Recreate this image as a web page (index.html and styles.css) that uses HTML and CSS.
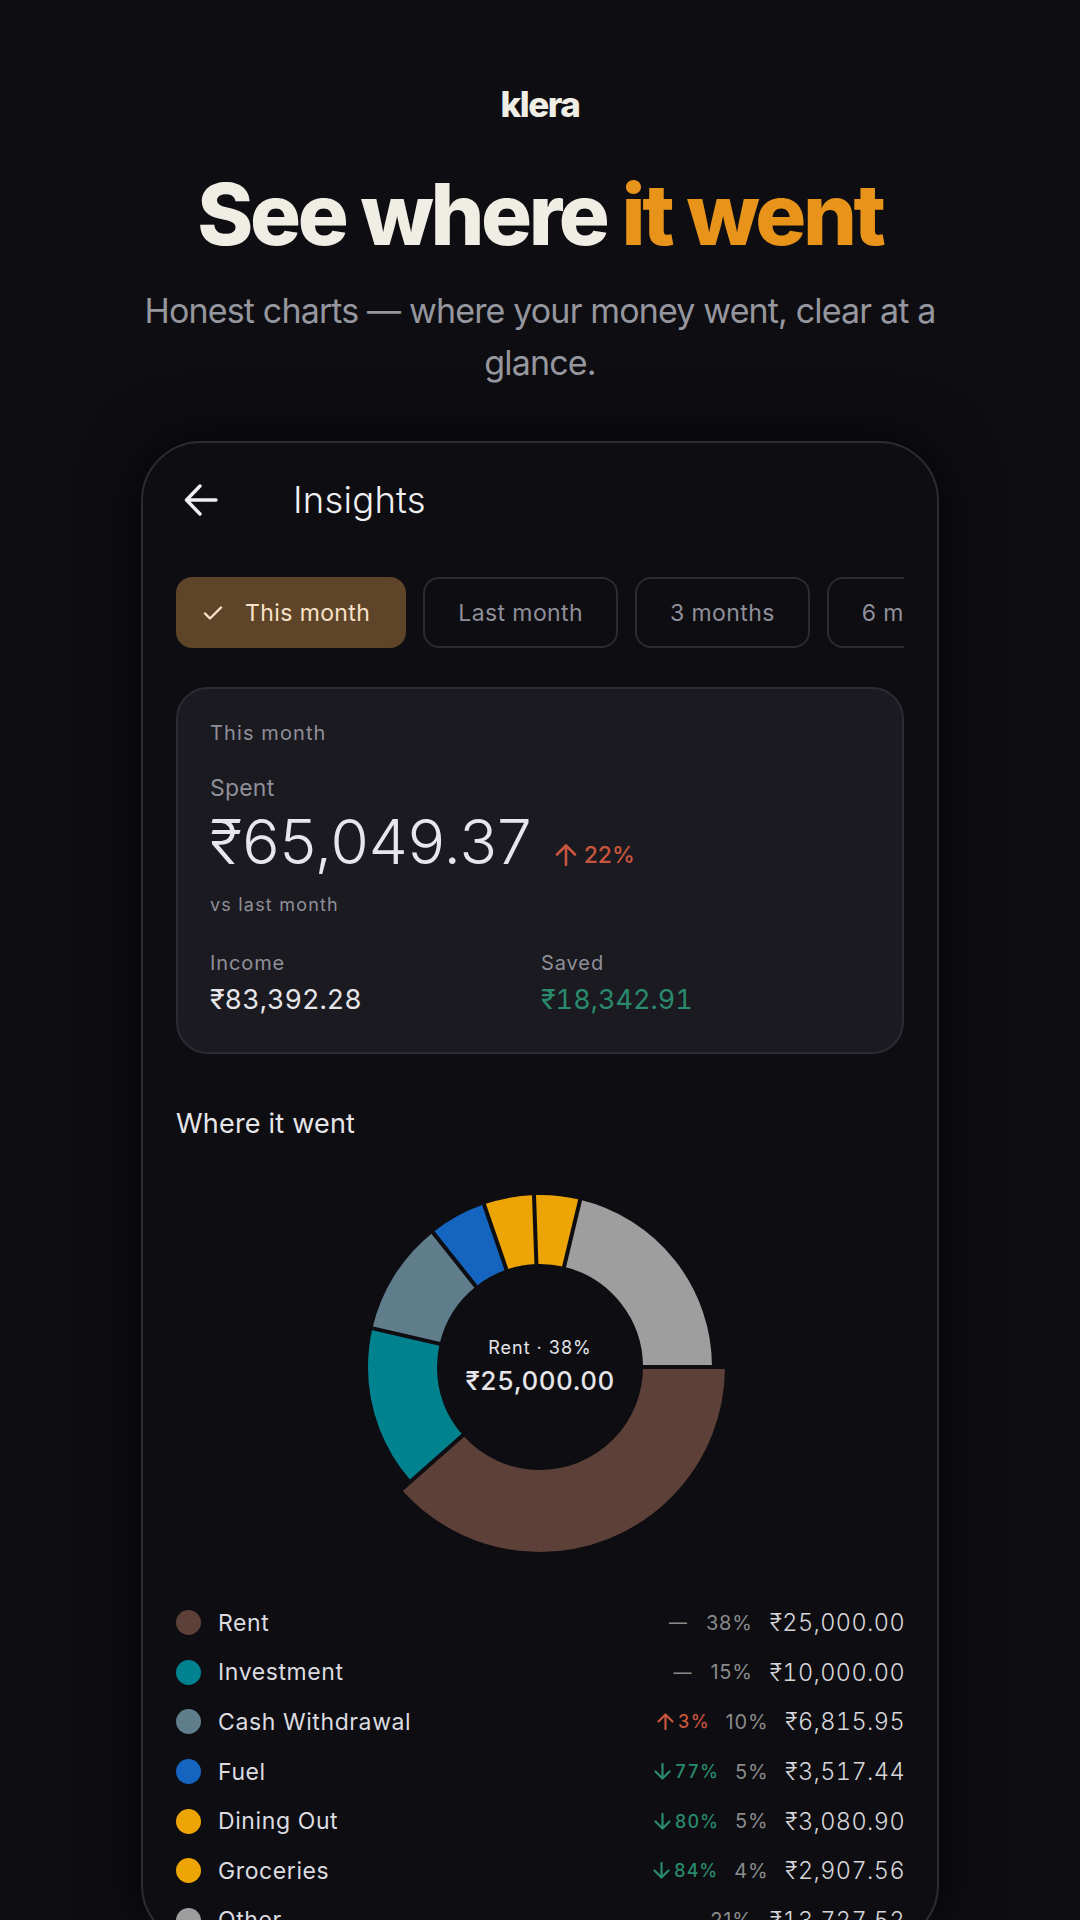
FILE: index.html
```html
<!DOCTYPE html>
<html lang="en">
<head>
  <meta charset="UTF-8" />
  <meta name="viewport" content="width=device-width, initial-scale=1.0" />
  <title>Klera - See where it went</title>
  <link rel="stylesheet" href="styles.css">
</head>
<body>
  <div class="hero">
    <div class="logo">klera</div>
    <h1>See where <span class="accent">it went</span></h1>
    <p class="tagline">Honest charts — where your money went, clear at a glance.</p>
  </div>

  <div class="phone">
    <div class="topbar">
      <svg class="back" width="34" height="32" viewBox="0 0 34 32" fill="none" stroke="#f0f0f2" stroke-width="3.4" stroke-linecap="round" stroke-linejoin="round">
        <path d="M32 16H3M16 2 2.500 16 16 30" />
      </svg>
      <div class="screen-title">Insights</div>
    </div>

    <div class="chips">
      <div class="chip selected">
        <svg width="20" height="14" viewBox="0 0 20 14" fill="none" stroke="#f7e2c8" stroke-width="2.400" stroke-linecap="round" stroke-linejoin="round">
          <path d="M2 7.500 7 12.500 18 1.500" />
        </svg>
        This month
      </div>
      <div class="chip">Last month</div>
      <div class="chip">3 months</div>
      <div class="chip">6 months</div>
    </div>

    <div class="card">
      <div class="period">This month</div>
      <div class="spent-label">Spent</div>
      <div class="spent-row">
        <span class="spent-value">₹65,049.37</span>
        <span class="spent-delta">
          <svg width="22" height="22" viewBox="0 0 22 22" fill="none" stroke="#c8553d" stroke-width="2.600" stroke-linecap="round" stroke-linejoin="round">
            <path d="M11 21V2M2 10.500 11 1.500 20 10.500" />
          </svg>
          22%
        </span>
      </div>
      <div class="versus">vs last month</div>
      <div class="totals">
        <div>
          <div class="total-label">Income</div>
          <div class="total-value">₹83,392.28</div>
        </div>
        <div>
          <div class="total-label">Saved</div>
          <div class="total-value green">₹18,342.91</div>
        </div>
      </div>
    </div>

    <div class="section-title">Where it went</div>

    <div class="donut">
      <svg width="372" height="372" viewBox="-186 -186 372 372" fill="none">
        <!-- angles run clockwise from 3 o'clock, pathLength 360 so dasharray is in degrees -->
        <circle r="144" stroke="#5d4037" stroke-width="82" pathLength="360" stroke-dasharray="138.500 221.500" />
        <circle r="137.500" stroke="#00838f" stroke-width="69" pathLength="360" stroke-dasharray="54.500 305.500" stroke-dashoffset="-138.500" />
        <circle r="137.500" stroke="#607d8b" stroke-width="69" pathLength="360" stroke-dasharray="38.500 321.500" stroke-dashoffset="-193" />
        <circle r="137.500" stroke="#1565c0" stroke-width="69" pathLength="360" stroke-dasharray="19.500 340.500" stroke-dashoffset="-231.500" />
        <circle r="137.500" stroke="#eca504" stroke-width="69" pathLength="360" stroke-dasharray="17 343" stroke-dashoffset="-251" />
        <circle r="137.500" stroke="#eca504" stroke-width="69" pathLength="360" stroke-dasharray="15.500 344.500" stroke-dashoffset="-268" />
        <circle r="137.500" stroke="#9e9e9e" stroke-width="69" pathLength="360" stroke-dasharray="76.500 283.500" stroke-dashoffset="-283.500" />
        <g class="gaps">
          <line x1="95" x2="186" />
          <line x1="95" x2="186" transform="rotate(138.500)" />
          <line x1="95" x2="186" transform="rotate(193)" />
          <line x1="95" x2="186" transform="rotate(231.500)" />
          <line x1="95" x2="186" transform="rotate(251)" />
          <line x1="95" x2="186" transform="rotate(268)" />
          <line x1="95" x2="186" transform="rotate(283.500)" />
        </g>
      </svg>
      <div class="donut-center">
        <div class="donut-label">Rent · 38%</div>
        <div class="donut-value">₹25,000.00</div>
      </div>
    </div>

    <div class="legend">
      <div class="row">
        <span class="dot rent"></span><span class="name">Rent</span>
        <span class="dash">—</span><span class="pct">38%</span><span class="amount">₹25,000.00</span>
      </div>
      <div class="row">
        <span class="dot invest"></span><span class="name">Investment</span>
        <span class="dash">—</span><span class="pct">15%</span><span class="amount">₹10,000.00</span>
      </div>
      <div class="row">
        <span class="dot cash"></span><span class="name">Cash Withdrawal</span>
        <span class="delta up"><svg width="17" height="17" viewBox="0 0 17 17" fill="none" stroke="currentColor" stroke-width="2.200" stroke-linecap="round" stroke-linejoin="round"><path d="M8.500 16V1.500M1.500 8.500l7-7 7 7" /></svg>3%</span>
        <span class="pct">10%</span><span class="amount">₹6,815.95</span>
      </div>
      <div class="row">
        <span class="dot fuel"></span><span class="name">Fuel</span>
        <span class="delta down"><svg width="17" height="17" viewBox="0 0 17 17" fill="none" stroke="currentColor" stroke-width="2.200" stroke-linecap="round" stroke-linejoin="round"><path d="M8.500 1V15.500M1.500 8.500l7 7 7-7" /></svg>77%</span>
        <span class="pct">5%</span><span class="amount">₹3,517.44</span>
      </div>
      <div class="row">
        <span class="dot amber"></span><span class="name">Dining Out</span>
        <span class="delta down"><svg width="17" height="17" viewBox="0 0 17 17" fill="none" stroke="currentColor" stroke-width="2.200" stroke-linecap="round" stroke-linejoin="round"><path d="M8.500 1V15.500M1.500 8.500l7 7 7-7" /></svg>80%</span>
        <span class="pct">5%</span><span class="amount">₹3,080.90</span>
      </div>
      <div class="row">
        <span class="dot amber"></span><span class="name">Groceries</span>
        <span class="delta down"><svg width="17" height="17" viewBox="0 0 17 17" fill="none" stroke="currentColor" stroke-width="2.200" stroke-linecap="round" stroke-linejoin="round"><path d="M8.500 1V15.500M1.500 8.500l7 7 7-7" /></svg>84%</span>
        <span class="pct">4%</span><span class="amount">₹2,907.56</span>
      </div>
      <div class="row">
        <span class="dot other"></span><span class="name">Other</span>
        <span class="pct">21%</span><span class="amount">₹13,727.52</span>
      </div>
    </div>
  </div>
</body>
</html>
```

FILE: styles.css
```css
html, body {
  margin: 0;
  height: 1920px;
  overflow: hidden;
}
body {
  font-family: Inter, "Noto Sans", sans-serif;
  background-color: #0d0d12;
  color: #e6e6ea;
}

/* top heading */
.hero {
  text-align: center;
  padding-top: 84px;
}
.logo {
  font-size: 35px;
  font-weight: 800;
  line-height: 40px;
  letter-spacing: -1.500px;
  color: #f0ede4;
}
h1 {
  margin: 41px 0 0;
  font-size: 85px;
  font-weight: 800;
  line-height: 100px;
  letter-spacing: -3.400px;
  color: #f0ede4;
}
.accent {
  color: #e8941a;
}
.tagline {
  width: 800px;
  margin: 20px auto 0;
  font-size: 34px;
  font-weight: 400;
  line-height: 52px;
  letter-spacing: -0.850px;
  color: #96969e;
}

/* phone frame, runs off the bottom of the page */
.phone {
  width: 794px;
  height: 1500px;
  margin: 52px auto 0;
  border: 2px solid #2b2b33;
  border-radius: 60px;
  box-shadow: 0 0 60px rgba(0, 0, 0, 0.6);
  background: #0d0d12;
}
.topbar {
  display: flex;
  align-items: center;
  height: 113px;
  padding-left: 41px;
  gap: 75px;
}
.screen-title {
  font-size: 36.500px;
  font-weight: 350;
  letter-spacing: 0.200px;
  color: #f0f0f2;
}

.chips {
  display: flex;
  gap: 17px;
  width: 728px;
  margin: 21px 0 0 33px;
  overflow: hidden;
}
.chip {
  flex: none;
  display: flex;
  align-items: center;
  gap: 22px;
  box-sizing: border-box;
  height: 71px;
  padding: 0 33px;
  border: 2px solid #2b2b33;
  border-radius: 16px;
  font-size: 23px;
  letter-spacing: 0.400px;
  color: #8f8f99;
}
.chip.selected {
  padding: 0 34px 0 25px;
  background: #5e4529;
  border-color: #5e4529;
  color: #f7e2c8;
}

.card {
  box-sizing: border-box;
  width: 728px;
  height: 367px;
  margin: 39px 0 0 33px;
  padding: 30px 32px 0;
  background: #1a1a20;
  border: 2px solid #2b2b33;
  border-radius: 32px;
}
.period {
  font-size: 20px;
  line-height: 28px;
  letter-spacing: 1.100px;
  color: #8f8f99;
}
.spent-label {
  margin-top: 26px;
  font-size: 23px;
  line-height: 30px;
  letter-spacing: 0.200px;
  color: #8f8f99;
}
.spent-row {
  display: flex;
  align-items: center;
  gap: 23px;
  margin-top: 3px;
}
.spent-value {
  font-size: 62px;
  font-weight: 300;
  line-height: 72px;
  color: #e6e6ee;
}
.spent-delta {
  display: flex;
  align-items: center;
  gap: 7px;
  margin-top: 26px;
  font-size: 23px;
  font-weight: 500;
  color: #c8553d;
}
.versus {
  margin-top: 15px;
  font-size: 18px;
  line-height: 24px;
  letter-spacing: 1.200px;
  color: #8f8f99;
}
.totals {
  display: grid;
  grid-template-columns: 331px 1fr;
  margin-top: 33px;
}
.total-label {
  font-size: 20px;
  line-height: 26px;
  letter-spacing: 0.900px;
  color: #8f8f99;
}
.total-value {
  margin-top: 6px;
  font-size: 27px;
  line-height: 36px;
  letter-spacing: 0;
  font-feature-settings: "tnum";
}
.green {
  color: #2a8a6e;
}

.section-title {
  margin: 54px 0 0 33px;
  font-size: 27px;
  line-height: 32px;
  letter-spacing: 0.200px;
  color: #e6e6ea;
}

.donut {
  position: relative;
  width: 372px;
  height: 372px;
  margin: 41px auto 0;
}
.gaps line {
  stroke: #0d0d12;
  stroke-width: 4;
}
.donut-center {
  position: absolute;
  inset: 0;
  display: flex;
  flex-direction: column;
  align-items: center;
  justify-content: center;
}
.donut-label {
  font-size: 18px;
  line-height: 26px;
  letter-spacing: 1px;
}
.donut-value {
  margin-top: 2px;
  font-size: 26px;
  font-weight: 500;
  line-height: 36px;
  letter-spacing: 0.300px;
  font-feature-settings: "tnum";
}

.legend {
  margin: 45px 32px 0 33px;
}
.row {
  display: flex;
  align-items: center;
  height: 49.600px;
}
.dot {
  flex: none;
  width: 25px;
  height: 25px;
  margin-right: 17px;
  border-radius: 50%;
}
.rent { background: #5d4037; }
.invest { background: #00838f; }
.cash { background: #607d8b; }
.fuel { background: #1565c0; }
.amber { background: #eca504; }
.other { background: #9e9e9e; }
.name {
  flex: 1;
  font-size: 23px;
  letter-spacing: 0.600px;
  color: #dcdce0;
}
.dash {
  margin-right: 19px;
  font-size: 18px;
  color: #8a8a8a;
}
.delta {
  display: flex;
  align-items: center;
  gap: 4px;
  margin-right: 16px;
  font-size: 18px;
  font-weight: 500;
  letter-spacing: 1px;
  font-feature-settings: "tnum";
}
.up { color: #c8553d; }
.down { color: #2a8a6e; }
.pct {
  font-size: 20px;
  letter-spacing: 0.800px;
  color: #8a8a8a;
}
.amount {
  margin-left: 17px;
  font-size: 23.500px;
  font-weight: 350;
  letter-spacing: 0.400px;
  color: #d6d6da;
  font-feature-settings: "tnum";
}
```
